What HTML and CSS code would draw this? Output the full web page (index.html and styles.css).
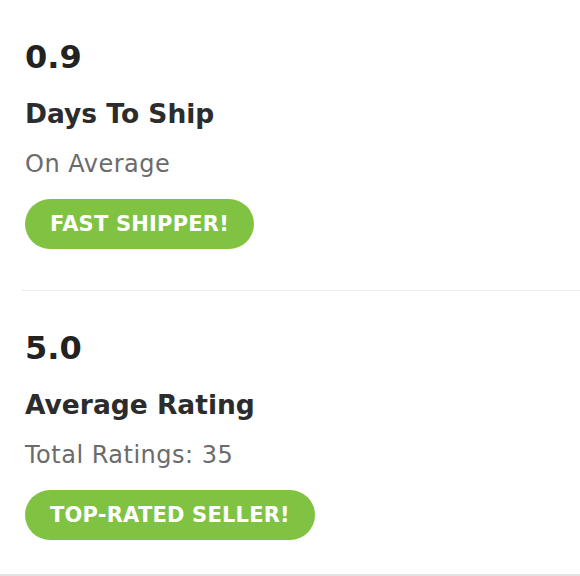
FILE: index.html
```html
<!DOCTYPE html>
<html>
<head>
<meta charset="utf-8">
<link rel="stylesheet" href="styles.css">
</head>
<body>
<div class="stats">
  <section class="stat stat-first">
    <div class="stat-value">0.9</div>
    <div class="stat-label">Days To Ship</div>
    <div class="stat-sub">On Average</div>
    <div class="badge">FAST SHIPPER!</div>
  </section>
  <section class="stat stat-last">
    <div class="stat-value">5.0</div>
    <div class="stat-label">Average Rating</div>
    <div class="stat-sub">Total Ratings: 35</div>
    <div class="badge">TOP-RATED SELLER!</div>
  </section>
</div>
</body>
</html>
```
FILE: styles.css
```css
html, body {
  margin: 0;
  padding: 0;
  background: #ffffff;
}
body {
  font-family: "DejaVu Sans", "Liberation Sans", sans-serif;
  width: 580px;
  height: 576px;
  overflow: hidden;
}
.stats {
  display: flex;
  flex-direction: column;
  border-bottom: 2px solid #e2e2e2;
}
.stat {
  display: flex;
  flex-direction: column;
  align-items: flex-start;
  padding-left: 25px;
  padding-top: 37px;
}
.stat-first {
  padding-bottom: 41px;
  margin-left: 22px;
  padding-left: 3px;
  border-bottom: 1px solid #ececec;
}
.stat-last {
  padding-bottom: 34px;
}
.stat-value {
  font-size: 32px;
  line-height: 40px;
  font-weight: 700;
  color: #222222;
}
.stat-label {
  margin-top: 21px;
  font-size: 26.5px;
  line-height: 32px;
  font-weight: 700;
  color: #2c2c2c;
}
.stat-sub {
  margin-top: 19px;
  font-size: 24px;
  line-height: 30px;
  color: #6b6b6b;
  letter-spacing: 0.5px;
}
.badge {
  margin-top: 20px;
  height: 50px;
  box-sizing: border-box;
  padding: 0 25px;
  display: flex;
  align-items: center;
  border-radius: 25px;
  background: #80c342;
  color: #ffffff;
  font-size: 21px;
  font-weight: 700;
  letter-spacing: 0.2px;
}
```
